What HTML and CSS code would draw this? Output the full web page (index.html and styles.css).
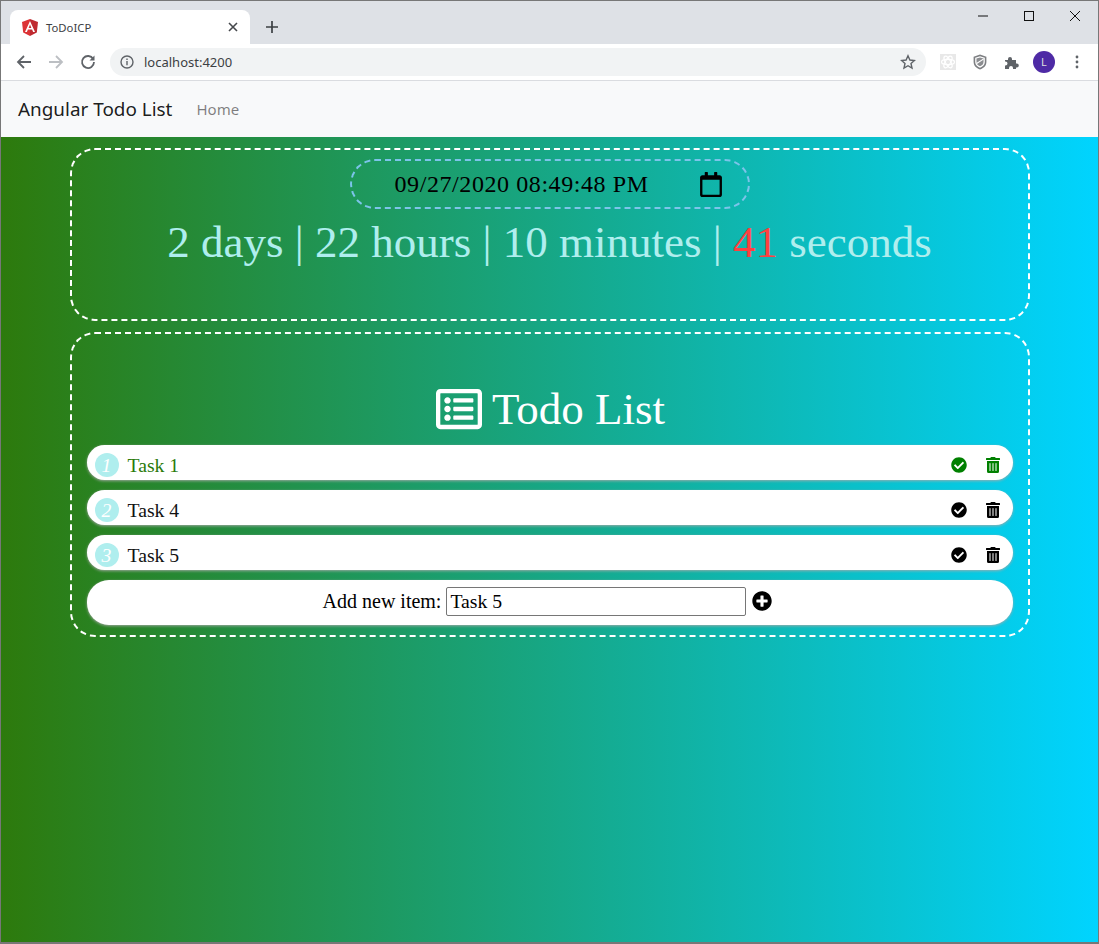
FILE: index.html
```html
<!DOCTYPE html>
<html lang="en">
<head>
  <meta charset="UTF-8" />
  <title>ToDoICP</title>
  <link rel="stylesheet" href="styles.css">
</head>
<body>
  <div class="window">
    <div class="tabstrip">
      <div class="tab">
        <svg class="tab-logo" viewBox="0 0 16 17"><path fill="#dc3336" d="M8 0 0 2.9l1.2 10.6L8 17z"/><path fill="#bf2a30" d="M8 0v17l6.8-3.5L16 2.9z"/><path fill="#fff" d="M8 2 3 13h1.9l1-2.500h4.200l1 2.500H13zM6.600 9 8 5.600 9.400 9z"/></svg>
        <span class="tab-title">ToDoICP</span>
        <svg class="tab-close" viewBox="0 0 10 10"><path d="M1 1l8 8M9 1 1 9" stroke="#45484c" stroke-width="1.600"/></svg>
      </div>
      <svg class="newtab" viewBox="0 0 12 12"><path d="M6 0v12M0 6h12" stroke="#3c4043" stroke-width="1.700"/></svg>
      <div class="winctrls">
        <svg viewBox="0 0 12 12"><path d="M1 6h10" stroke="#111" stroke-width="1"/></svg>
        <svg viewBox="0 0 12 12"><rect x="1.500" y="1.500" width="9" height="9" fill="none" stroke="#111"/></svg>
        <svg viewBox="0 0 12 12"><path d="M1 1l10 10M11 1 1 11" stroke="#111" stroke-width="1"/></svg>
      </div>
    </div>

    <div class="toolbar">
      <svg class="nav-ico" viewBox="0 0 16 16"><path d="M15 8H2M8 2 2 8l6 6" fill="none" stroke="#5f6368" stroke-width="1.800"/></svg>
      <svg class="nav-ico" viewBox="0 0 16 16"><path d="M1 8h13M8 2l6 6-6 6" fill="none" stroke="#bcbfc3" stroke-width="1.800"/></svg>
      <svg class="nav-ico" viewBox="0 0 16 16"><path d="M13.200 5A6 6 0 1 0 14 8" fill="none" stroke="#5f6368" stroke-width="1.800"/><path d="M14.500 1.500v5h-5z" fill="#5f6368"/></svg>
      <div class="omnibox">
        <svg class="info" viewBox="0 0 14 14"><circle cx="7" cy="7" r="6" fill="none" stroke="#5f6368" stroke-width="1.400"/><path d="M7 6v4.200M7 3.600v1.400" stroke="#5f6368" stroke-width="1.400"/></svg>
        <span class="url">localhost:4200</span>
        <svg class="star" viewBox="0 0 16 16"><path d="M8 1.800l1.900 4.200 4.500.5-3.400 3 1 4.500L8 11.700l-4 2.300 1-4.500-3.400-3 4.500-.5z" fill="none" stroke="#5f6368" stroke-width="1.400"/></svg>
      </div>
      <div class="ext">
        <svg class="ext-ico" viewBox="0 0 16 16"><rect width="16" height="16" fill="#e8e8e8"/><g fill="none" stroke="#fff" stroke-width="1.200"><ellipse cx="8" cy="8" rx="6.500" ry="2.600"/><ellipse cx="8" cy="8" rx="6.500" ry="2.600" transform="rotate(60 8 8)"/><ellipse cx="8" cy="8" rx="6.500" ry="2.600" transform="rotate(120 8 8)"/></g></svg>
        <svg class="ext-ico" viewBox="1.500 0.500 13 15"><path d="M8 1 2 3v5c0 3.500 2.600 6 6 7 3.400-1 6-3.500 6-7V3z" fill="#7d7f82"/><path d="M8 2.500 3.500 4v4c0 2.600 1.900 4.500 4.500 5.400 2.600-.9 4.500-2.800 4.500-5.400V4z" fill="#fff"/><path d="M8 3.700 4.700 4.800V8c0 2 1.400 3.300 3.300 4 1.900-.7 3.300-2 3.300-4V4.800z" fill="#8b8d90"/><path d="M4.800 9.500l6.400-4.200" stroke="#fff" stroke-width="1.100"/></svg>
        <svg class="ext-ico" viewBox="0 0 16 16"><path fill="#5f6368" d="M1 6h3V5a2 2 0 0 1 4 0v1h4v3.500h.8a2 2 0 0 1 0 4H12V15H9v-1a2 2 0 0 0-4 0v1H1v-3.500h.5a2 2 0 0 0 0-4H1z"/></svg>
        <div class="avatar">L</div>
        <svg class="menu" viewBox="0 0 4 14"><circle cx="2" cy="2" r="1.400" fill="#5f6368"/><circle cx="2" cy="7" r="1.400" fill="#5f6368"/><circle cx="2" cy="12" r="1.400" fill="#5f6368"/></svg>
      </div>
    </div>

    <nav class="navbar">
      <a class="brand">Angular Todo List</a>
      <a class="nav-link">Home</a>
    </nav>

    <main class="page">
      <div class="container">
        <section class="card timer-card">
          <div class="date-box">
            <span class="date-value">09/27/2020 08:49:48 PM</span>
            <svg class="calendar" viewBox="0 0 448 512"><path d="M400 64h-48V12c0-6.600-5.400-12-12-12h-40c-6.600 0-12 5.400-12 12v52H160V12c0-6.600-5.400-12-12-12h-40c-6.600 0-12 5.400-12 12v52H48C21.500 64 0 85.500 0 112v352c0 26.500 21.500 48 48 48h352c26.500 0 48-21.500 48-48V112c0-26.500-21.500-48-48-48zm-6 400H54c-3.300 0-6-2.700-6-6V160h352v298c0 3.300-2.700 6-6 6z"/></svg>
          </div>
          <div class="countdown">2 days | 22 hours | 10 minutes | <span class="secs">41</span> seconds</div>
        </section>

        <section class="card todo-card">
          <h1 class="todo-title">
            <svg class="title-ico" viewBox="0 0 512 512"><path d="M464 32H48C21.490 32 0 53.490 0 80v352c0 26.510 21.490 48 48 48h416c26.510 0 48-21.490 48-48V80c0-26.510-21.490-48-48-48zm-6 400H54a6 6 0 0 1-6-6V86a6 6 0 0 1 6-6h404a6 6 0 0 1 6 6v340a6 6 0 0 1-6 6zm-42-92v24c0 6.627-5.373 12-12 12H204c-6.627 0-12-5.373-12-12v-24c0-6.627 5.373-12 12-12h200c6.627 0 12 5.373 12 12zm0-96v24c0 6.627-5.373 12-12 12H204c-6.627 0-12-5.373-12-12v-24c0-6.627 5.373-12 12-12h200c6.627 0 12 5.373 12 12zm0-96v24c0 6.627-5.373 12-12 12H204c-6.627 0-12-5.373-12-12v-24c0-6.627 5.373-12 12-12h200c6.627 0 12 5.373 12 12zm-252 12c0 19.882-16.118 36-36 36s-36-16.118-36-36 16.118-36 36-36 36 16.118 36 36zm0 96c0 19.882-16.118 36-36 36s-36-16.118-36-36 16.118-36 36-36 36 16.118 36 36zm0 96c0 19.882-16.118 36-36 36s-36-16.118-36-36 16.118-36 36-36 36 16.118 36 36z"/></svg>
            Todo List
          </h1>

          <div class="todo-item done">
            <span class="num">1</span>
            <span class="task">Task 1</span>
            <svg class="act-check" viewBox="0 0 512 512"><path d="M504 256c0 136.967-111.033 248-248 248S8 392.967 8 256 119.033 8 256 8s248 111.033 248 248zM227.314 387.314l184-184c6.248-6.248 6.248-16.379 0-22.627l-22.627-22.627c-6.248-6.249-16.379-6.249-22.628 0L216 308.118l-70.059-70.059c-6.248-6.248-16.379-6.248-22.628 0l-22.627 22.627c-6.248 6.248-6.248 16.379 0 22.627l104 104c6.249 6.249 16.379 6.249 22.628.001z"/></svg>
            <svg class="act-trash" viewBox="0 0 448 512"><path d="M32 464a48 48 0 0 0 48 48h288a48 48 0 0 0 48-48V128H32zm272-256a16 16 0 0 1 32 0v224a16 16 0 0 1-32 0zm-96 0a16 16 0 0 1 32 0v224a16 16 0 0 1-32 0zm-96 0a16 16 0 0 1 32 0v224a16 16 0 0 1-32 0zM432 32H312l-9.400-18.700A24 24 0 0 0 281.100 0H166.800a23.720 23.720 0 0 0-21.400 13.300L136 32H16A16 16 0 0 0 0 48v32a16 16 0 0 0 16 16h416a16 16 0 0 0 16-16V48a16 16 0 0 0-16-16z"/></svg>
          </div>
          <div class="todo-item">
            <span class="num">2</span>
            <span class="task">Task 4</span>
            <svg class="act-check" viewBox="0 0 512 512"><path d="M504 256c0 136.967-111.033 248-248 248S8 392.967 8 256 119.033 8 256 8s248 111.033 248 248zM227.314 387.314l184-184c6.248-6.248 6.248-16.379 0-22.627l-22.627-22.627c-6.248-6.249-16.379-6.249-22.628 0L216 308.118l-70.059-70.059c-6.248-6.248-16.379-6.248-22.628 0l-22.627 22.627c-6.248 6.248-6.248 16.379 0 22.627l104 104c6.249 6.249 16.379 6.249 22.628.001z"/></svg>
            <svg class="act-trash" viewBox="0 0 448 512"><path d="M32 464a48 48 0 0 0 48 48h288a48 48 0 0 0 48-48V128H32zm272-256a16 16 0 0 1 32 0v224a16 16 0 0 1-32 0zm-96 0a16 16 0 0 1 32 0v224a16 16 0 0 1-32 0zm-96 0a16 16 0 0 1 32 0v224a16 16 0 0 1-32 0zM432 32H312l-9.400-18.700A24 24 0 0 0 281.100 0H166.800a23.720 23.720 0 0 0-21.400 13.300L136 32H16A16 16 0 0 0 0 48v32a16 16 0 0 0 16 16h416a16 16 0 0 0 16-16V48a16 16 0 0 0-16-16z"/></svg>
          </div>
          <div class="todo-item">
            <span class="num">3</span>
            <span class="task">Task 5</span>
            <svg class="act-check" viewBox="0 0 512 512"><path d="M504 256c0 136.967-111.033 248-248 248S8 392.967 8 256 119.033 8 256 8s248 111.033 248 248zM227.314 387.314l184-184c6.248-6.248 6.248-16.379 0-22.627l-22.627-22.627c-6.248-6.249-16.379-6.249-22.628 0L216 308.118l-70.059-70.059c-6.248-6.248-16.379-6.248-22.628 0l-22.627 22.627c-6.248 6.248-6.248 16.379 0 22.627l104 104c6.249 6.249 16.379 6.249 22.628.001z"/></svg>
            <svg class="act-trash" viewBox="0 0 448 512"><path d="M32 464a48 48 0 0 0 48 48h288a48 48 0 0 0 48-48V128H32zm272-256a16 16 0 0 1 32 0v224a16 16 0 0 1-32 0zm-96 0a16 16 0 0 1 32 0v224a16 16 0 0 1-32 0zm-96 0a16 16 0 0 1 32 0v224a16 16 0 0 1-32 0zM432 32H312l-9.400-18.700A24 24 0 0 0 281.100 0H166.800a23.720 23.720 0 0 0-21.400 13.300L136 32H16A16 16 0 0 0 0 48v32a16 16 0 0 0 16 16h416a16 16 0 0 0 16-16V48a16 16 0 0 0-16-16z"/></svg>
          </div>

          <form class="add-form">
            <label class="add-label" for="newitem">Add new item:</label>
            <input id="newitem" class="add-input" type="text" value="Task 5" />
            <svg class="add-ico" viewBox="0 0 512 512"><path d="M256 8C119 8 8 119 8 256s111 248 248 248 248-111 248-248S393 8 256 8zm144 276c0 6.600-5.400 12-12 12h-92v92c0 6.600-5.400 12-12 12h-56c-6.600 0-12-5.400-12-12v-92h-92c-6.600 0-12-5.400-12-12v-56c0-6.600 5.400-12 12-12h92v-92c0-6.600 5.400-12 12-12h56c6.600 0 12 5.400 12 12v92h92c6.600 0 12 5.400 12 12v56z"/></svg>
          </form>
        </section>
      </div>
    </main>
  </div>
</body>
</html>
```

FILE: styles.css
```css
html, body {
  margin: 0;
  height: 100%;
}
body {
  font-family: "Liberation Serif", serif;
  overflow: hidden;
}
.window {
  box-sizing: border-box;
  height: 944px;
  display: flex;
  flex-direction: column;
  border: 1px solid #777;
  border-bottom-width: 2px;
}

/* browser chrome */
.tabstrip {
  height: 43px;
  flex-shrink: 0;
  background-color: #dee1e6;
  display: flex;
  align-items: flex-end;
}
.tab {
  width: 240px;
  height: 34px;
  margin-left: 9px;
  background-color: #fff;
  border-radius: 8px 8px 0 0;
  display: flex;
  align-items: center;
  box-sizing: border-box;
  padding: 0 12px;
}
.tab-logo {
  width: 16px;
  height: 17px;
}
.tab-title {
  margin-left: 8px;
  font-family: "Noto Sans", sans-serif;
  font-size: 11.3px;
  color: #3c4043;
  flex: 1;
}
.tab-close {
  width: 10px;
  height: 10px;
}
.newtab {
  width: 12px;
  height: 12px;
  margin: 0 0 11px 16px;
}
.winctrls {
  margin-left: auto;
  align-self: flex-start;
  display: flex;
  gap: 34px;
  padding: 9px 17px 0 0;
}
.winctrls svg {
  width: 12px;
  height: 12px;
}
.toolbar {
  height: 36px;
  flex-shrink: 0;
  background-color: #fff;
  border-bottom: 1px solid #dadce0;
  display: flex;
  align-items: center;
  padding-left: 15px;
}
.nav-ico {
  width: 16px;
  height: 16px;
  margin-right: 16px;
}
.omnibox {
  width: 816px;
  height: 28px;
  margin-left: -2px;
  background-color: #f1f3f4;
  border-radius: 14px;
  display: flex;
  align-items: center;
  padding: 0 10px;
  box-sizing: border-box;
}
.info {
  width: 14px;
  height: 14px;
}
.url {
  margin-left: 10px;
  font-family: "Noto Sans", sans-serif;
  font-size: 13px;
  color: #3c4043;
  flex: 1;
}
.star {
  width: 16px;
  height: 16px;
}
.ext {
  display: flex;
  align-items: center;
  margin-left: 14px;
}
.ext-ico {
  width: 16px;
  height: 16px;
  margin-right: 16px;
}
.avatar {
  width: 22px;
  height: 22px;
  border-radius: 50%;
  background-color: #4e2aa5;
  color: #ddd;
  font-family: "Noto Sans", sans-serif;
  font-size: 11px;
  line-height: 22px;
  text-align: center;
  margin: 0 20px 0 -3px;
}
.menu {
  width: 4px;
  height: 14px;
}

/* app navbar */
.navbar {
  height: 56px;
  flex-shrink: 0;
  background-color: #f8f9fa;
  display: flex;
  align-items: center;
  padding-left: 17px;
  font-family: "Noto Sans", sans-serif;
}
.brand {
  font-size: 18.9px;
  color: rgba(0, 0, 0, 0.9);
}
.nav-link {
  margin-left: 24px;
  font-size: 15px;
  color: rgba(0, 0, 0, 0.5);
}

/* page */
.page {
  flex: 1;
  background: linear-gradient(90deg, #2d7a0c 0%, #00d4ff 100%);
}
.container {
  width: 960px;
  margin: 0 auto;
}
.card {
  box-sizing: border-box;
  border: 2px dashed #fff;
  border-radius: 25px;
  margin-top: 11px;
  padding: 9px 15px 0;
}
.timer-card {
  height: 173px;
}
.todo-card {
  height: 305px;
}
.date-box {
  box-sizing: border-box;
  width: 400px;
  height: 50px;
  margin: 0 auto;
  border: 2px dashed #7cc4ea;
  border-radius: 25px;
  display: flex;
  align-items: center;
  justify-content: space-between;
  padding: 0 26px 0 43px;
}
.date-value {
  font-size: 24px;
  letter-spacing: 0.58px;
  color: #000;
}
.calendar {
  width: 22px;
  height: 25px;
}
.countdown {
  margin-top: 4px;
  text-align: center;
  font-size: 45px;
  line-height: 58px;
  color: #afeeee;
}
.secs {
  color: #ff4040;
}
.todo-title {
  margin: 40px 0 10px;
  padding-left: 2px;
  display: flex;
  align-items: center;
  justify-content: center;
  gap: 10px;
  font-size: 45px;
  font-weight: 400;
  line-height: 52px;
  color: #fff;
}
.title-ico {
  width: 46px;
  height: 46px;
  fill: #fff;
}
.todo-item {
  box-sizing: border-box;
  height: 35px;
  margin-bottom: 10px;
  background-color: #fff;
  border-radius: 18px;
  box-shadow: 0 1px 3px rgba(170, 170, 170, 0.9);
  display: flex;
  align-items: center;
  padding: 5px 13px 0 8px;
  font-size: 19.7px;
  color: #111;
}
.todo-item.done {
  color: #2a7a0a;
}
.num {
  width: 24px;
  height: 24px;
  border-radius: 50%;
  background-color: #afeeee;
  color: #fff;
  font-style: italic;
  line-height: 24px;
  text-align: center;
}
.task {
  margin-left: 9px;
  flex: 1;
}
.act-check {
  width: 16px;
  height: 16px;
  margin-right: 19px;
  fill: currentColor;
}
.act-trash {
  width: 14px;
  height: 16px;
  fill: currentColor;
}
.todo-item svg {
  color: #000;
}
.todo-item.done svg {
  color: #008000;
}
.add-form {
  box-sizing: border-box;
  height: 45px;
  padding: 0 4px 2px 0;
  background-color: #fff;
  border-radius: 22px;
  box-shadow: 0 1px 3px rgba(170, 170, 170, 0.9);
  display: flex;
  align-items: center;
  justify-content: center;
  font-size: 20px;
}
.add-input {
  box-sizing: border-box;
  width: 300px;
  height: 29px;
  margin-left: 5px;
  padding: 1px 3px;
  border: 1px solid #767676;
  border-radius: 2px;
  font-family: "Liberation Serif", serif;
  font-size: 19.7px;
}
.add-ico {
  width: 20px;
  height: 20px;
  margin: 0 0 2px 6px;
}
```
